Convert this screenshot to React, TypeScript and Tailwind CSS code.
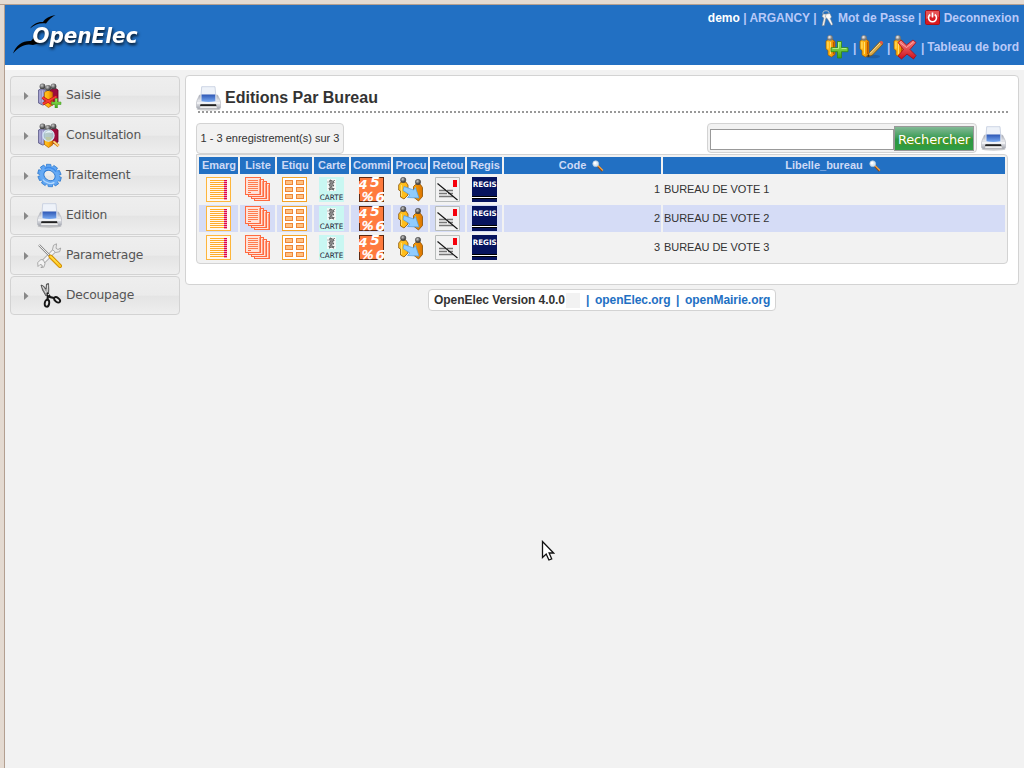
import React from "react";

const sans = "font-['Liberation_Sans',sans-serif]";
const deja = "font-['DejaVu_Sans',sans-serif]";

type IconProps = { className?: string };

function Defs() {
  return (
    <svg width="0" height="0" className="absolute">
      <defs>
        <linearGradient id="gold" x1="0" x2="1"><stop offset="0" stopColor="#ffc928" /><stop offset=".5" stopColor="#ffae0c" /><stop offset="1" stopColor="#dc7400" /></linearGradient>
        <radialGradient id="head" cx=".4" cy=".35"><stop offset="0" stopColor="#f4f4f4" /><stop offset="1" stopColor="#777" /></radialGradient>
        <radialGradient id="darkhead" cx=".4" cy=".35"><stop offset="0" stopColor="#ccc" /><stop offset="1" stopColor="#484848" /></radialGradient>
        <linearGradient id="green" x1="0" y1="0" x2="0" y2="1"><stop offset="0" stopColor="#a5ee61" /><stop offset="1" stopColor="#3ca318" /></linearGradient>
        <linearGradient id="red" x1="0" y1="0" x2="0" y2="1"><stop offset="0" stopColor="#f58282" /><stop offset="1" stopColor="#cf101b" /></linearGradient>
        <linearGradient id="body" x1="0" y1="0" x2="0" y2="1"><stop offset="0" stopColor="#a4a7b2" /><stop offset=".4" stopColor="#e3e5ea" /><stop offset=".7" stopColor="#d3d5db" /><stop offset="1" stopColor="#9fa2ab" /></linearGradient>
        <linearGradient id="screen" x1="0" y1="0" x2="0" y2="1"><stop offset="0" stopColor="#2d56b4" /><stop offset="1" stopColor="#79aaf2" /></linearGradient>
      </defs>
    </svg>
  );
}

function Printer({ className = "" }: IconProps) {
  return (
    <svg width="25" height="25" viewBox="0 0 25 25" className={"shrink-0 " + className}>
      <ellipse cx="12.5" cy="23.3" rx="12" ry="1.5" fill="#777" opacity=".35" />
      <path d="M3.5 9h18l2.500 5c.8 2 .9 5 .6 7.500-.2 1-1 1.400-2 1.400h-20c-1 0-1.800-.4-2-1.400C.3 19 .4 16 1.200 14z" fill="url(#body)" stroke="#b2b5be" strokeWidth=".6" />
      <path d="M5.700.7h13.300l.8 9H5z" fill="#eef2f9" stroke="#c3ccdd" strokeWidth=".8" />
      <path d="M4.500 8.700h16v8h-16z" fill="#e3e7ef" />
      <path d="M5.500 8.500h13.800v6.800q-7 1.300-13.800 0z" fill="url(#screen)" />
      <path d="M1 17h23" stroke="#fff" strokeWidth="1.200" />
      <path d="M4.500 18.200h15.500l.5 2.100H4z" fill="#161616" />
      <path d="M4.300 20.300h16.200l.8 1.900H3.700z" fill="#fafafa" stroke="#aaa" strokeWidth=".4" />
    </svg>
  );
}

function Trio() {
  return (
    <>
      <path d="M1.500 7l4-2 4 3v13l-4 1-4-2z" fill="#9492c3" stroke="#5c5a88" strokeWidth=".8" />
      <path d="M13 7l5-2 3 2v12l-4 2-4-4z" fill="#9d0a3b" stroke="#680022" strokeWidth=".8" />
      <path d="M3 8v11M5.500 7.500v13" stroke="#bbbae2" strokeWidth=".9" />
      <path d="M7.500 9.500l3.500-2.500 4.500 2.500v12.500l-4 2.500-4-3z" fill="url(#gold)" stroke="#b86700" strokeWidth=".8" />
      <circle cx="5.500" cy="3.400" r="2.900" fill="url(#darkhead)" />
      <circle cx="16.500" cy="3.400" r="2.900" fill="url(#darkhead)" />
      <circle cx="11" cy="5" r="3" fill="url(#darkhead)" />
    </>
  );
}

function Saisie() {
  return (
    <svg width="25" height="25" viewBox="0 0 25 25">
      <Trio />
      <path d="M5.500 14.500L16.500 21.500M19.500 13.500L6 21" stroke="#b01515" strokeWidth="3" />
      <path d="M5.500 14.500L16.500 21.500M19.500 13.500L6 21" stroke="#f53a34" strokeWidth="2" />
      <path d="M18 15.500h2.500V19H24v2.500h-3.500V25H18v-3.500h-3.500V19H18z" fill="url(#green)" stroke="#3f9822" strokeWidth=".5" />
    </svg>
  );
}

function Consultation() {
  return (
    <svg width="25" height="25" viewBox="0 0 25 25">
      <Trio />
      <circle cx="11.500" cy="12.500" r="5.600" fill="#a7cde9" fillOpacity=".85" stroke="#d6e7f5" strokeWidth="1.200" />
      <path d="M7.500 10.500q4-5 8-.5-4-1-8 .5" fill="#e8f4fc" />
      <path d="M8.500 14h6l-1 3.500h-4z" fill="#bcc9a5" />
      <path d="M16.500 18.500l5 4.500" stroke="#d98312" strokeWidth="3" />
      <path d="M16.500 18.200l5 4.500" stroke="#ffd98a" strokeWidth="1.500" />
    </svg>
  );
}

function Gear() {
  const teeth = Array.from({ length: 10 }, (_, i) => i * 36);
  return (
    <svg width="25" height="25" viewBox="0 0 25 25">
      <g transform="translate(12.500 12.500) rotate(35) scale(1.060 .94)">
        {teeth.map((a) => (
          <path key={a} d="M-2.500-7.500L-2.100-11.400h4.200L2.500-7.500z" transform={`rotate(${a})`} fill="#5ea4f2" stroke="#2473ca" strokeWidth=".7" />
        ))}
        <circle r="7.500" fill="none" stroke="#66aaf5" strokeWidth="4" />
        <ellipse rx="5.700" ry="5.100" fill="none" stroke="#2c79d1" strokeWidth=".9" />
        <path d="M-7.500-3A8 8 0 0 1 3-7.500" fill="none" stroke="#3d8bea" strokeWidth="1.500" />
        <path d="M7.500 3A8 8 0 0 1-3 7.500" fill="none" stroke="#b4daff" strokeWidth="1.200" />
      </g>
    </svg>
  );
}

function Tools() {
  return (
    <svg width="25" height="25" viewBox="0 0 25 25">
      <path d="M5 20L19 6" stroke="#999" strokeWidth="4.200" />
      <path d="M5 20L19 6" stroke="#f4f4f4" strokeWidth="2.800" />
      <path d="M19.500.8l-3 1.500-1 4.200 3.200 3 4-.8 1-3.700-2.700 1.500-2-1.200.3-2z" fill="#eaeaea" stroke="#999" strokeWidth=".8" />
      <path d="M4 16.500l-3.300 3 .3 4 2-2 2 .5.300 2-1.500.5 3-.3 1.200-3.500-1.500-3.500z" fill="#f3f3f3" stroke="#999" strokeWidth=".8" />
      <path d="M2 2l11 11" stroke="#888" strokeWidth="2.300" />
      <path d="M2 2l11 11" stroke="#eee" strokeWidth="1" />
      <path d="M13.500 13.500L23 23" stroke="#cf8b00" strokeWidth="4" strokeLinecap="round" />
      <path d="M13.500 13.500L23 23" stroke="#ffcb20" strokeWidth="2.400" strokeLinecap="round" />
      <path d="M14 13.500l7 7" stroke="#fff18a" strokeWidth=".7" />
    </svg>
  );
}

function Scissors() {
  return (
    <svg width="25" height="25" viewBox="0 0 25 25">
      <path d="M4 2l2.500 1 2.500 3 .5-5L11.500.5l.3 6-.3 5-2.500 1.500-3.500-6z" fill="#8e8e8e" stroke="#333" strokeWidth=".7" />
      <path d="M5.500 3.500l4.500 8M10.700 2l-.7 7" stroke="#eee" strokeWidth=".9" />
      <path d="M10 10l3 4 4 1M11 12l-.5 5" fill="none" stroke="#181818" strokeWidth="2.200" />
      <ellipse cx="10" cy="20.200" rx="2.200" ry="3.500" transform="rotate(8 10 20)" fill="none" stroke="#161616" strokeWidth="1.900" />
      <ellipse cx="20" cy="16.800" rx="3.400" ry="2" transform="rotate(38 20 17)" fill="none" stroke="#161616" strokeWidth="1.900" />
      <circle cx="11.500" cy="11.500" r=".8" fill="#ddd" />
    </svg>
  );
}

function Person() {
  return (
    <>
      <path d="M1 6l2.500-1.500h4l2.500 2v13l-3.500 2.500L3 20v-4.500L1 14z" fill="url(#gold)" stroke="#9a5800" strokeWidth=".7" />
      <path d="M3 7v6.500M5.500 7v12" stroke="#ffe37c" strokeWidth=".9" />
      <path d="M8.500 7v12" stroke="#bd5600" strokeWidth="1" />
      <circle cx="5" cy="2.900" r="2.700" fill="url(#head)" stroke="#777" strokeWidth=".4" />
    </>
  );
}

function UserAdd() {
  return (
    <svg width="25" height="25" viewBox="0 0 25 25">
      <Person />
      <path d="M12.500 6.500h4v6.200H23v4h-6.500V23h-4v-6.300H6v-4h6.500z" fill="url(#green)" stroke="#328812" strokeWidth=".8" />
      <path d="M13.500 7.500v6h-6M16.500 13.500h5" fill="none" stroke="#c2f69c" strokeWidth=".8" />
    </svg>
  );
}

function UserEdit() {
  return (
    <svg width="25" height="25" viewBox="0 0 25 25">
      <ellipse cx="14" cy="21.500" rx="7" ry="1.700" fill="#143c71" opacity=".35" />
      <Person />
      <path d="M8.500 22l2-4.500L21 6.500l3 2.500-10.500 11z" fill="#d6a644" stroke="#7c5414" strokeWidth=".8" />
      <path d="M11 18.500L21.500 7.500" stroke="#f6dfa0" strokeWidth="1" />
      <path d="M20.500 7.200l1.500-1.400q1.500 0 2.300 2l-1.600 2z" fill="#df5947" />
      <path d="M8.500 22l1-2.200 1.500 1.200z" fill="#222" />
    </svg>
  );
}

function UserDelete() {
  return (
    <svg width="25" height="25" viewBox="0 0 25 25">
      <Person />
      <path d="M5 7.500l3-2.500 5.500 5 6.500-5 3 2.500-6 7 6 6-2.500 3.500-6.500-5-5.500 5-3.500-3 5.500-6.500z" fill="url(#red)" stroke="#a90912" strokeWidth=".8" strokeLinejoin="round" />
      <path d="M7 7.500l6.500 5 7-5.500" fill="none" stroke="#ffaaa8" strokeWidth=".9" />
    </svg>
  );
}

function Keys() {
  return (
    <svg width="16" height="17" viewBox="0 0 16 17">
      <ellipse cx="6" cy="3" rx="3.200" ry="2.300" fill="none" stroke="#b9c0c4" strokeWidth=".9" />
      <path d="M3 4h3.500l1.300 3-2 1.500L4.300 15.500l-2.300.3L3.800 8 2 6.500z" fill="#eee" stroke="#7a7d7e" strokeWidth=".5" />
      <path d="M6 4l4-.5 1.500 3.500-1.200 1.500 2.500 6-1.500.8-3.800-6.300L5.500 7z" fill="#fafafa" stroke="#7a7d7e" strokeWidth=".5" />
    </svg>
  );
}

function Power() {
  return (
    <svg width="15" height="15" viewBox="0 0 15 15" className="-mt-[2px]">
      <rect x=".5" y=".5" width="14" height="14" rx="1.200" fill="#da1a20" stroke="#ab1218" />
      <path d="M1 1h13v6q-6-2-13 2z" fill="#ea6565" opacity=".75" />
      <path d="M5.200 4.500a4 4 0 1 0 4.600 0M7.500 2.500v5" fill="none" stroke="#fff" strokeWidth="1.600" />
    </svg>
  );
}

function Magnifier() {
  return (
    <svg width="12" height="12" viewBox="0 0 12 12">
      <path d="M5.500 5.500l5 5.500" stroke="#8a4c1c" strokeWidth="2.200" />
      <path d="M6 5.500l5 5" stroke="#f6a84b" strokeWidth="1.100" />
      <circle cx="3.700" cy="3.700" r="2.900" fill="#dcecf7" stroke="#b3c9dc" strokeWidth=".8" />
      <circle cx="3" cy="3" r="1.500" fill="#fff" />
    </svg>
  );
}

function Emarg() {
  return (
    <svg width="25" height="25" viewBox="0 0 25 25" shapeRendering="crispEdges">
      <rect x=".5" y=".5" width="24" height="24" fill="#fff8ee" stroke="#fdb63c" />
      {[3, 5, 7, 9, 11, 13, 15, 17, 19, 21].map((y) => (
        <g key={y}><rect x="4" y={y} width="14" height="1" fill="#ffad2a" /><rect x="18" y={y} width="3" height="1" fill="#e0004f" /><rect x="18" y={y + 1} width="3" height="1" fill="#f4a0b8" /></g>
      ))}
    </svg>
  );
}

function Liste() {
  return (
    <svg width="25" height="25" viewBox="0 0 25 25" shapeRendering="crispEdges">
      {[[9.5, 6.5], [6.5, 4.5], [3.5, 2.5], [0.5, 0.5]].map(([x, y], i) => (
        <g key={i} transform={`translate(${x} ${y})`}>
          <rect width="15" height="17" fill="#ffe2d8" stroke="#ff6a3f" />
          <path d="M2.500 3h10M2.500 5h10M2.500 7h10M2.500 9h10M2.500 11h10M2.500 13h10" stroke="#ff7d52" />
          <path d="M2.500 15h3" stroke="#ff6a3f" />
          <path d="M14 1v15" stroke="#ff9d7e" />
        </g>
      ))}
    </svg>
  );
}

function Etiqu() {
  return (
    <svg width="25" height="25" viewBox="0 0 25 25" shapeRendering="crispEdges">
      <rect x=".5" y=".5" width="24" height="24" fill="#fff" stroke="#f3a328" />
      {[3.500, 10.500, 17.500].map((y) => [3.500, 14.500].map((x) => (
        <rect key={`${x}-${y}`} x={x} y={y} width="7" height="4" fill="#ffc282" stroke="#ef8637" />
      )))}
    </svg>
  );
}

function Carte() {
  return (
    <svg width="25" height="25" viewBox="0 0 25 25">
      <path fill="#c9f7f2" d="M0 0h25v25H0z" />
      <path fill="#f4f7f5" d="M8 2h9v12H8z" />
      <path d="M11 3h2v1h2v2h-1v2h1v1h-2v2h2v2h-2v-1h-1v1h-2v-2h1V9h-1V7h1V5h-1zM15.500 3v1.500M9 4.500v2" fill="#888" stroke="#333" strokeWidth=".6" strokeDasharray="1 1" />
      <text x=".8" y="22.600" fontFamily="DejaVu Sans" fontSize="7.500" textLength="23.400" lengthAdjust="spacingAndGlyphs" fill="#223">CARTE</text>
    </svg>
  );
}

function Commi() {
  return (
    <svg width="25" height="25" viewBox="0 0 25 25">
      <path fill="#ff7b3e" d="M0 0h25v25H0z" />
      <path d="M0 0h25v1H0zM24 0h1v25h-1zM0 24h25v1H0zM0 0h1v4H0zM0 17h1v8H0z" fill="#5c2912" />
      <g fill="#fff" fontFamily="DejaVu Sans" fontStyle="italic">
        <text x="-.5" y="12" fontSize="13" fontWeight="bold">4</text>
        <text x="11" y="10" fontSize="14" fontWeight="bold">5</text>
        <text x="2.500" y="23.500" fontSize="13" stroke="#fff" strokeWidth=".5">%</text>
        <text x="16.500" y="25" fontSize="14" fontWeight="bold">6</text>
      </g>
    </svg>
  );
}

function Procu() {
  return (
    <svg width="25" height="25" viewBox="0 0 25 25">
      <path d="M.7 8l2.500-3h4.600L10 8v10l-4 4-3.500-2v-6L.7 13zM15.500 9.500l2-2h5l2 3v9L20.500 24l-5-4z" fill="url(#gold)" stroke="#8d5200" strokeWidth=".8" />
      <path d="M3.500 8v11M17.500 10v4" stroke="#ffde70" />
      <circle cx="5.200" cy="3" r="2.700" fill="url(#darkhead)" stroke="#444" strokeWidth=".5" />
      <circle cx="20" cy="5" r="2.700" fill="url(#darkhead)" stroke="#444" strokeWidth=".5" />
      <path d="M6 9.500l9.500 3.500 2-2.500 3.500 10.500-11.500-.5 2.500-2.500-7-4.500z" fill="#8fccff" stroke="#4d9be0" strokeWidth=".7" />
    </svg>
  );
}

function Retou() {
  return (
    <svg width="25" height="25" viewBox="0 0 25 25">
      <path d="M.5.5h24v24H.5z" fill="#f2f2f2" stroke="#b8bcbb" />
      <path d="M18 3h4v7h-4z" fill="#f5000b" />
      <path d="M4 13.500h7M12 13.500h6M4 16.500h8M13 16.500h5M4 19.500h14" stroke="#777" strokeWidth="1.500" />
      <path d="M2.500 6.500l20 16.500" stroke="#111" strokeWidth="1.100" />
    </svg>
  );
}

function Regis() {
  return (
    <svg width="25" height="25" viewBox="0 0 25 25">
      <path d="M0 0h25v25H0z" fill="#07145e" />
      <text x=".7" y="9.700" fill="#fff" fontFamily="DejaVu Sans" fontWeight="bold" fontSize="7.500" textLength="24" lengthAdjust="spacingAndGlyphs">REGIS</text>
      <path d="M0 19h25v3H0z" fill="#000" /><path d="M0 20h25v1H0z" fill="#fff" />
    </svg>
  );
}

const columns = [
  { label: "Emarg", Icon: Emarg },
  { label: "Liste", Icon: Liste },
  { label: "Etiqu", Icon: Etiqu },
  { label: "Carte", Icon: Carte },
  { label: "Commi", Icon: Commi },
  { label: "Procu", Icon: Procu },
  { label: "Retou", Icon: Retou },
  { label: "Regis", Icon: Regis },
];

const menu = [
  { label: "Saisie", Icon: Saisie },
  { label: "Consultation", Icon: Consultation },
  { label: "Traitement", Icon: Gear },
  { label: "Edition", Icon: Printer },
  { label: "Parametrage", Icon: Tools },
  { label: "Decoupage", Icon: Scissors },
];

const gridCols = "grid grid-cols-[39px_35px_35px_35px_40px_35px_35px_35px_157px_342px] gap-x-[2px]";

function Logo() {
  return (
    <svg width="150" height="60" viewBox="5 5 150 60" className="shrink-0">
      <path d="M30 28.500C33 24 38 21.500 43 22c2-3.500 7-6 12.500-7-4 2-7 5-9.500 8.500-6-.8-11 .8-16 5z" fill="#000" />
      <path d="M13 53.500C16 45 23 40.500 31 41c2-2 3-4 5-6l4 8-7 2c-8-2-14 2-20 8.500z" fill="#000" />
      <text x="32.500" y="42.500" textLength="105" lengthAdjust="spacingAndGlyphs" fill="#fff" fontFamily="DejaVu Sans" fontStyle="italic" fontWeight="bold" fontSize="21" className="drop-shadow-[1.5px_2px_1.5px_rgba(0,0,0,0.8)]">OpenElec</text>
    </svg>
  );
}

function Header() {
  return (
    <header className="flex h-[65px] justify-between border-b-[5px] border-white bg-[#2270c3]">
      <Logo />
      <div className="flex flex-col items-end pr-[5px] text-[12px] font-bold leading-[14px] text-[#b9c9f8]">
        <div className="mt-[4px] flex h-[18px] items-center whitespace-pre">
          <span className="text-white">demo</span><span> | ARGANCY | </span>
          <Keys /><span className="ml-[2px]">Mot de Passe | </span><Power /><span className="ml-[4px]">Deconnexion</span>
        </div>
        <div className="mt-[8px] flex h-[25px] items-center">
          <UserAdd /><span className="w-[9px] text-center">|</span><UserEdit /><span className="w-[9px] text-center">|</span><UserDelete /><span className="w-[9px] text-center">|</span><span className="-mt-px">Tableau de bord</span>
        </div>
      </div>
    </header>
  );
}

function Sidebar() {
  return (
    <nav className={"flex w-[170px] flex-col gap-[1px] pt-[6px] " + deja}>
      {menu.map(({ label, Icon }) => (
        <a key={label} className="flex h-[39px] items-center rounded-[4px] border border-[#d3d3d3] bg-[linear-gradient(#eeeeee_0%,#ebebeb_49%,#e4e4e4_52%,#eeeeee_100%)] pl-[13px] text-[12px] text-[#555]">
          <svg width="5" height="8" viewBox="0 0 5 8" className="mt-[1px]"><path d="M0 0l4.500 4L0 8z" fill="#888" /></svg>
          <span className="ml-[8px] flex w-[25px]"><Icon /></span>
          <span className="ml-[4px] text-[12.3px] tracking-[-0.2px]">{label}</span>
        </a>
      ))}
    </nav>
  );
}

function Table() {
  return (
    <div className="h-[110px] rounded-[4px] rounded-tl-none border border-[#d3d3d3] bg-[#f2f2f2] pl-[2px] pt-[2px]">
      <div className={gridCols}>
        {columns.map(({ label }) => (
          <div key={label} className="flex h-[17px] items-center justify-center overflow-hidden bg-[#2270c3] pl-px text-[11px] font-bold tracking-[-0.05px] text-[#cedaf6]">{label}</div>
        ))}
        {["Code", "Libelle_bureau"].map((label) => (
          <div key={label} className="flex h-[17px] items-center justify-center gap-[6px] bg-[#2270c3] pr-[2px] text-[11px] font-bold text-[#cedaf6]">{label}<Magnifier /></div>
        ))}
      </div>
      {[1, 2, 3].map((n) => (
        <div key={n} className={gridCols + " mt-[2px] text-[11px] text-[#333]"}>
          {columns.map(({ label, Icon }) => (
            <div key={label} className={"flex h-[27px] items-center justify-center " + (n === 2 ? "bg-[#d5dcf6]" : "")}><Icon /></div>
          ))}
          <div className={"flex h-[27px] items-center justify-end pr-px " + (n === 2 ? "bg-[#d5dcf6]" : "")}>{n}</div>
          <div className={"flex h-[27px] items-center pl-px tracking-[-0.07px] " + (n === 2 ? "bg-[#d5dcf6]" : "")}>BUREAU DE VOTE {n}</div>
        </div>
      ))}
    </div>
  );
}

export default function App() {
  return (
    <div className={"relative flex h-[768px] w-[1024px] flex-col overflow-hidden bg-[#e4dad1] " + sans}>
      <Defs />
      <div className="h-[5px] shrink-0 border-b border-[#b39f90]" />
      <div className="ml-[4px] flex-1 border-l border-[#b39f90] bg-[#f2f2f2]">
        <Header />
        <div className="flex gap-[5px] pl-[5px]">
          <Sidebar />
          <div className="mt-[5px] flex w-[834px] flex-col items-center">
            <main className="h-[210px] w-full rounded-[4px] border border-[#d3d3d3] bg-white px-[10px] pt-[10px]">
              <div className="flex h-[25px] items-center gap-[4px] text-[16px] font-bold text-[#333]">
                <Printer /><h1 className="mb-[2px]">Editions Par Bureau</h1>
              </div>
              <div className="ml-[2px] h-[2px] bg-[repeating-linear-gradient(90deg,#999_0_2px,transparent_2px_4px)]" />
              <div className="mt-[10px] flex items-start justify-between">
                <div className="flex h-[31px] w-[148px] items-center justify-center rounded-[4px] border border-[#d3d3d3] bg-[#f2f2f2] text-[11px] text-[#333]">1 - 3 enregistrement(s) sur 3</div>
                <div className="flex">
                  <div className="flex h-[30px] w-[270px] items-start rounded-[4px] border border-[#d3d3d3] bg-[#f2f2f2] pl-[2px]">
                    <input className="mt-[5px] h-[21px] w-[184px] border border-[#999] bg-white" />
                    <button className={"mt-[2px] flex h-[25px] w-[80px] items-center justify-center border border-[#999] bg-[linear-gradient(#82b996,#3b9c54_48%,#2c9643_52%,#309d43)] pt-[2px] text-[13px] tracking-[-0.15px] text-white [text-shadow:1px_1px_1px_#799b00] " + deja}>Rechercher</button>
                  </div>
                  <Printer className="ml-[4px] mr-[2px] mt-[3px]" />
                </div>
              </div>
              <Table />
            </main>
            <footer className="mt-[4px] flex h-[22px] w-[348px] items-center rounded-[4px] border border-[#d3d3d3] bg-white pl-[5px] text-[12px] font-bold tracking-[-0.05px] text-[#2270c3]">
              <span className="w-[132px] whitespace-nowrap text-[#333]">OpenElec Version 4.0.0</span>
              <span className="h-[15px] w-[14px] bg-[#f2f2f2]" />
              <span className="ml-[6px] w-[9px]">|</span><span className="w-[81px]">openElec.org</span><span className="w-[9px]">|</span><span>openMairie.org</span>
            </footer>
          </div>
        </div>
      </div>
      <svg width="14" height="22" viewBox="0 0 14 22" className="absolute left-[541px] top-[540px]">
        <path d="M1.500 1.500v16l3.700-3.500 2.700 6 2.800-1.200-2.600-5.800h4.500z" fill="#fff" stroke="#111" strokeWidth="1.300" />
      </svg>
    </div>
  );
}
